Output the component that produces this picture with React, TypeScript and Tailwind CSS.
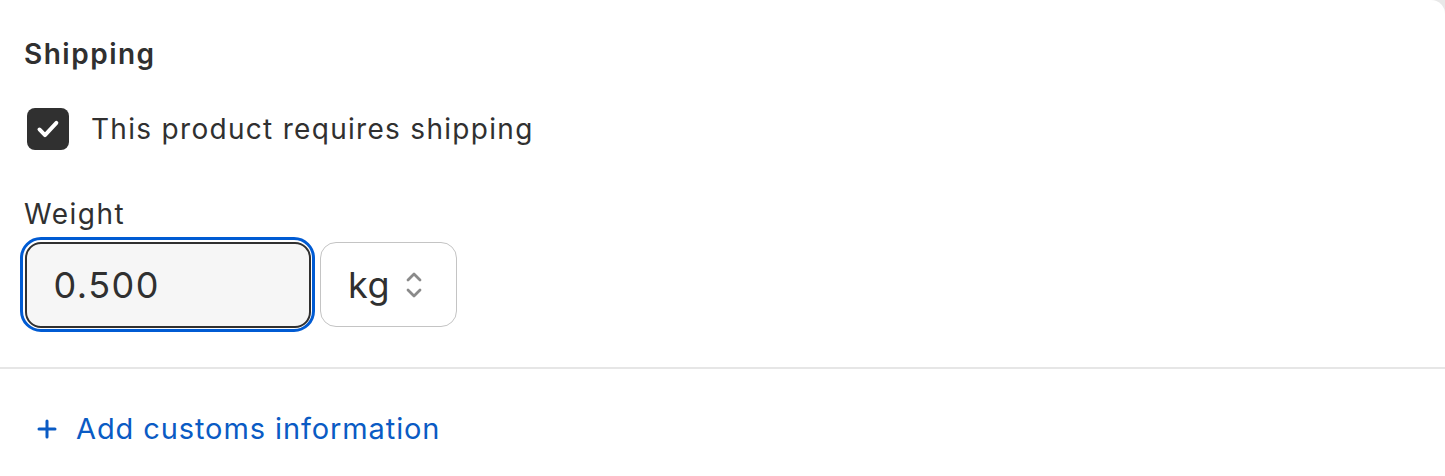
import React from "react";

export default function App() {
  return (
    <div className="w-[1445px] h-[476px] bg-[#e8e8e8] overflow-hidden" style={{ fontFamily: "Inter, 'Noto Sans', sans-serif" }}>
      <div className="w-full h-full bg-white rounded-tr-[14px] flex flex-col text-[#303030]">
        <div className="px-[24px] pt-[36px] pb-[35px] flex flex-col">
          <h2 className="text-[28px] leading-[36px] font-semibold tracking-[1.5px]">Shipping</h2>
          <label className="mt-[36px] flex items-center gap-[22px]">
            <span className="ml-[3px] w-[42px] h-[42px] rounded-[8px] bg-[#303030] flex items-center justify-center">
              <svg width="30" height="30" viewBox="0 0 20 20" fill="none">
                <path d="M4.3 10.3l3.7 3.8 7.6-8.2" stroke="white" strokeWidth="2.6" strokeLinecap="round" strokeLinejoin="round" />
              </svg>
            </span>
            <span className="text-[28px] leading-[36px] tracking-[1.3px]">This product requires shipping</span>
          </label>
          <div className="mt-[46px] text-[28px] leading-[36px] tracking-[1.5px]">Weight</div>
          <div className="mt-[5px] flex items-center gap-[5px]">
            <div className="ml-[-4px] rounded-[21px] border-[3px] border-[#005bd3] p-[1.5px]">
              <div className="w-[286px] h-[86px] rounded-[16px] border-2 border-[#303030] bg-[#f6f6f6] flex items-center pl-[27px] text-[36px] tracking-[1.5px]">
                0.500
              </div>
            </div>
            <div className="w-[137px] h-[85px] rounded-[16px] border-[1.5px] border-[#c4c4c4] bg-white flex items-center pl-[27px] gap-[12px]">
              <span className="text-[36px] tracking-[0.5px]">kg</span>
              <svg width="24" height="36" viewBox="0 0 24 36" fill="none">
                <path d="M6 13l6-6 6 6" stroke="#8a8a8a" strokeWidth="2.8" strokeLinecap="round" strokeLinejoin="round" />
                <path d="M6 23l6 6 6-6" stroke="#8a8a8a" strokeWidth="2.8" strokeLinecap="round" strokeLinejoin="round" />
              </svg>
            </div>
          </div>
        </div>
        <div className="h-[2px] bg-[#e6e6e6]" />
        <div className="px-[36px] pt-[40px] flex items-center gap-[18px] text-[#0a5bc4]">
          <svg width="22" height="22" viewBox="0 0 22 22" fill="none">
            <path d="M11 3v16M3 11h16" stroke="#0a5bc4" strokeWidth="3" strokeLinecap="round" />
          </svg>
          <span className="text-[29px] leading-[40px] tracking-[0.9px]">Add customs information</span>
        </div>
      </div>
    </div>
  );
}
